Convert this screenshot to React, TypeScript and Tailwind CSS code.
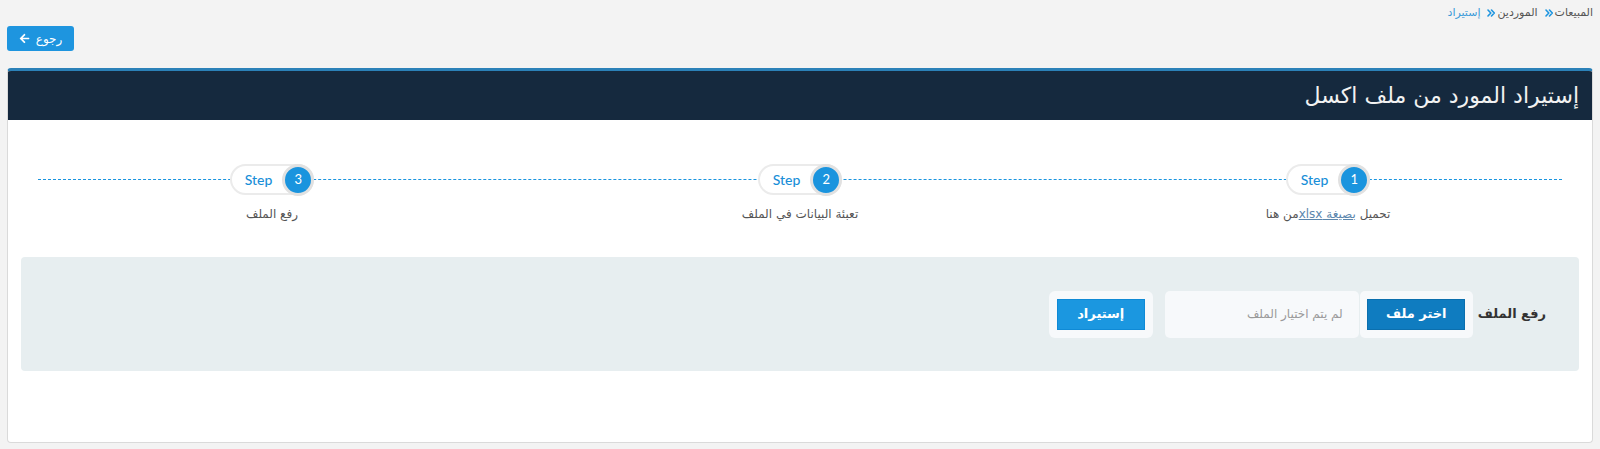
import React from "react";
import { FaArrowLeft } from "react-icons/fa";

const AR = { fontFamily: '"DejaVu Sans", "Noto Sans", sans-serif' };
const LAT = { fontFamily: 'Lato, "DejaVu Sans", sans-serif' };

function Sep() {
  return (
    <svg width="8" height="8" viewBox="0 0 8 8" className="ml-[7px] mr-[2px]" fill="none" stroke="#1e95df" strokeWidth="1.6" strokeLinecap="round" strokeLinejoin="round">
      <path d="M1 1 L3.8 4 L1 7" />
      <path d="M4.5 1 L7.3 4 L4.5 7" />
    </svg>
  );
}

function StepPill({ n }: { n: number }) {
  return (
    <div dir="ltr" className="relative z-10 flex h-[31px] items-center rounded-full border-2 border-[#ebebeb] bg-white">
      <span className="pl-[13px] pr-[10px] text-[14px] font-medium text-[#1a8fd8]" style={LAT}>
        Step
      </span>
      <span className="-my-[2px] -mr-[2px] flex h-[32px] w-[32px] items-center justify-center rounded-full border-[3px] border-[#e1e1e1] bg-[#1a94de] text-[13px] text-white" style={LAT}>
        {n}
      </span>
    </div>
  );
}

export default function App() {
  return (
    <div dir="rtl" className="min-h-[449px] bg-[#f3f3f3] px-[7px] pt-[5px]" style={AR}>
      <div className="flex h-[16px] items-center text-[11px] text-[#555]">
        <span>المبيعات</span>
        <Sep />
        <span>الموردين</span>
        <Sep />
        <span className="text-[#3d9bd9]">إستيراد</span>
      </div>

      <div className="mt-[5px] flex justify-end">
        <button className="flex h-[25px] w-[67px] items-center justify-center gap-[6px] rounded-[3px] bg-[#1e95df] text-[12px] text-white">
          <span>رجوع</span>
          <FaArrowLeft size={11} />
        </button>
      </div>

      <div className="mt-[17px] h-[375px] overflow-hidden rounded-[4px] border border-t-[3px] border-[#dadada] border-t-[#2b81b8] bg-white">
        <div className="flex h-[49px] items-center bg-[#15293e] px-[13px] text-[22px] text-[#f2f2f2]">
          إستيراد المورد من ملف اكسل
        </div>

        <div className="relative mt-[44px] grid grid-cols-3">
          <div className="absolute left-[30px] right-[30px] top-[15px] border-t border-dashed border-[#1a94de]" />
          <div className="flex flex-col items-center">
            <StepPill n={1} />
            <div className="mt-[10px] text-[12px] text-[#555]">
              تحميل <a className="text-[#5b86ad] underline">بصيغة xlsx</a>من هنا
            </div>
          </div>
          <div className="flex flex-col items-center">
            <StepPill n={2} />
            <div className="mt-[10px] text-[12px] text-[#555]">تعبئة البيانات في الملف</div>
          </div>
          <div className="flex flex-col items-center">
            <StepPill n={3} />
            <div className="mt-[10px] text-[12px] text-[#555]">رفع الملف</div>
          </div>
        </div>

        <div className="mx-[13px] mt-[34px] flex h-[114px] items-center rounded-[4px] bg-[#e7eef0] pr-[33px]">
          <div className="flex items-center">
            <span className="ml-[5px] text-[13px] font-bold text-[#333]">رفع الملف</span>
            <div className="flex h-[47px] w-[113px] items-center justify-center rounded-[5px] bg-[#f7f9fb]">
              <button className="h-[31px] w-[98px] border border-[#0b6fae] bg-[#0f7cc0] text-[13px] font-bold text-white">
                اختر ملف
              </button>
            </div>
            <div className="mr-[1px] flex h-[47px] w-[194px] items-center rounded-[5px] bg-[#f7f9fb] pr-[16px] text-[12px] text-[#9a9a9a]">
              لم يتم اختيار الملف
            </div>
            <div className="mr-[12px] flex h-[47px] w-[104px] items-center justify-center rounded-[6px] bg-[#f7f9fb]">
              <button className="h-[31px] w-[88px] border border-[#0f8ad6] bg-[#1b97e0] text-[13px] font-bold text-white">
                إستيراد
              </button>
            </div>
          </div>
        </div>
      </div>
    </div>
  );
}
